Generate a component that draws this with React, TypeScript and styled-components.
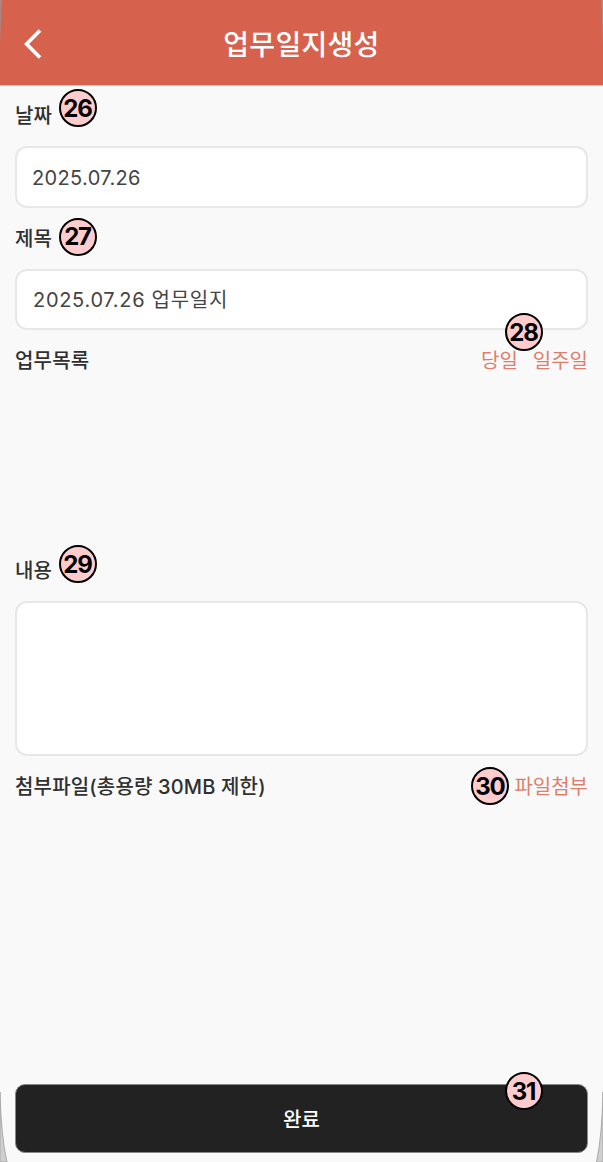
import React from "react";
import styled, { createGlobalStyle } from "styled-components";

const GlobalStyle = createGlobalStyle`
  * { box-sizing: border-box; }
  body { margin: 0; background: #f9f9f9; }
  button, input, textarea { font: inherit; color: inherit; }
`;

const Screen = styled.main`
  position: relative;
  display: flex;
  flex-direction: column;
  width: 603px;
  height: 1162px;
  overflow: hidden;
  background: #f9f9f9;
  color: #303030;
  font-family: Inter, "Noto Sans CJK KR", sans-serif;
  font-size: 20px;
`;

const Header = styled.header`
  display: grid;
  grid-template-columns: 66px 1fr 66px;
  align-items: center;
  flex: none;
  height: 86px;
  border-bottom: 1px solid #efb9af;
  background: #d6624d;
  color: #fff;
`;

const BackButton = styled.button`
  display: flex;
  justify-content: center;
  padding: 3px 0 0;
  border: 0;
  background: none;
`;

const Title = styled.h1`
  margin: 5px 0 0;
  font-size: 28px;
  line-height: 40px;
  font-weight: 500;
  letter-spacing: 0.3px;
  text-align: center;
`;

const Content = styled.div`
  display: flex;
  flex-direction: column;
  flex: 1;
  padding: 0 15px 9px;
`;

const LabelRow = styled.div<{ $height?: number }>`
  display: flex;
  align-items: center;
  justify-content: space-between;
  flex: none;
  height: ${(p) => p.$height ?? 61}px;
`;

const Label = styled.span`
  position: relative;
  font-size: 20px;
  line-height: 30px;
  font-weight: 500;
  letter-spacing: 0.17px;
  white-space: nowrap;
`;

const Actions = styled.div`
  position: relative;
  display: flex;
  gap: 15px;
`;

const LinkButton = styled.button`
  padding: 0;
  border: 0;
  background: none;
  color: #dd7e6d;
  font-size: 20px;
  line-height: 30px;
`;

const TextInput = styled.input<{ $height: number; $padding: string; $tracking: number }>`
  flex: none;
  width: 573px;
  height: ${(p) => p.$height}px;
  padding: ${(p) => p.$padding};
  border: 2px solid #e7e7e7;
  border-radius: 12px;
  outline: 0;
  background: #fff;
  color: #444;
  letter-spacing: ${(p) => p.$tracking}px;
`;

const TaskList = styled.div`
  flex: none;
  height: 149px;
`;

const TextArea = styled.textarea`
  flex: none;
  display: block;
  width: 573px;
  height: 155px;
  padding: 14px;
  border: 2px solid #e7e7e7;
  border-radius: 12px;
  outline: 0;
  resize: none;
  background: #fff;
`;

const SubmitButton = styled.button`
  position: relative;
  flex: none;
  height: 69px;
  margin: auto 0 0;
  padding: 0 0 1px;
  border: 1px solid #888;
  border-radius: 10px;
  background: #222;
  color: #fff;
  font-weight: 500;
`;

const Badge = styled.span<{ $left: number; $top: number }>`
  position: absolute;
  left: ${(p) => p.$left}px;
  top: ${(p) => p.$top}px;
  display: flex;
  align-items: center;
  justify-content: center;
  width: 38px;
  height: 38px;
  padding: 1px 1px 0 0;
  border: 2px solid #000;
  border-radius: 50%;
  background: #ffcccd;
  color: #000;
  font-family: Inter, sans-serif;
  font-size: 24px;
  line-height: 34px;
  font-weight: 700;
  letter-spacing: -1.2px;
`;

const FrameEdge = styled.svg`
  position: absolute;
  inset: 0;
  pointer-events: none;
`;

export default function App() {
  return (
    <>
      <GlobalStyle />
      <Screen>
        <Header>
          <BackButton aria-label="뒤로">
            <svg width="18" height="30" viewBox="0 0 18 30" fill="none">
              <path d="M16 1.5 2.5 15 16 28.5" stroke="#fff" strokeWidth="3.7" />
            </svg>
          </BackButton>
          <Title>업무일지생성</Title>
        </Header>
        <Content>
          <LabelRow $height={60}>
            <Label>날짜<Badge $left={44} $top={-12}>26</Badge></Label>
          </LabelRow>
          <TextInput $height={62} $padding="2px 14px 0 15px" $tracking={0.35} defaultValue="2025.07.26" />
          <LabelRow>
            <Label>제목<Badge $left={44} $top={-6}>27</Badge></Label>
          </LabelRow>
          <TextInput $height={61} $padding="0 17px 2px 16px" $tracking={0.7} defaultValue="2025.07.26 업무일지" />
          <LabelRow $height={62}>
            <Label>업무목록</Label>
            <Actions>
              <LinkButton>당일</LinkButton>
              <LinkButton>일주일</LinkButton>
              <Badge $left={24} $top={-33}>28</Badge>
            </Actions>
          </LabelRow>
          <TaskList />
          <LabelRow $height={60}>
            <Label>내용<Badge $left={44} $top={-11}>29</Badge></Label>
          </LabelRow>
          <TextArea />
          <LabelRow $height={62}>
            <Label>첨부파일(총용량 30MB 제한)</Label>
            <Actions>
              <Badge $left={-43} $top={-5}>30</Badge>
              <LinkButton>파일첨부</LinkButton>
            </Actions>
          </LabelRow>
          <SubmitButton>
            완료
            <Badge $left={489} $top={-13}>31</Badge>
          </SubmitButton>
        </Content>
        <FrameEdge width="603" height="1162" viewBox="0 0 603 1162">
          <path d="M0 0H2Q1 18 0 45Z" fill="#a98682" />
          <path d="M603 0H601.5Q602 18 603 45Z" fill="#b98a80" />
          <path d="M0 1092Q1 1137 7 1162H0Z" fill="#cfcfcf" stroke="#a8a8a8" />
          <path d="M603 1092Q602 1137 596.5 1162H603Z" fill="#cfcfcf" stroke="#a8a8a8" />
        </FrameEdge>
      </Screen>
    </>
  );
}
